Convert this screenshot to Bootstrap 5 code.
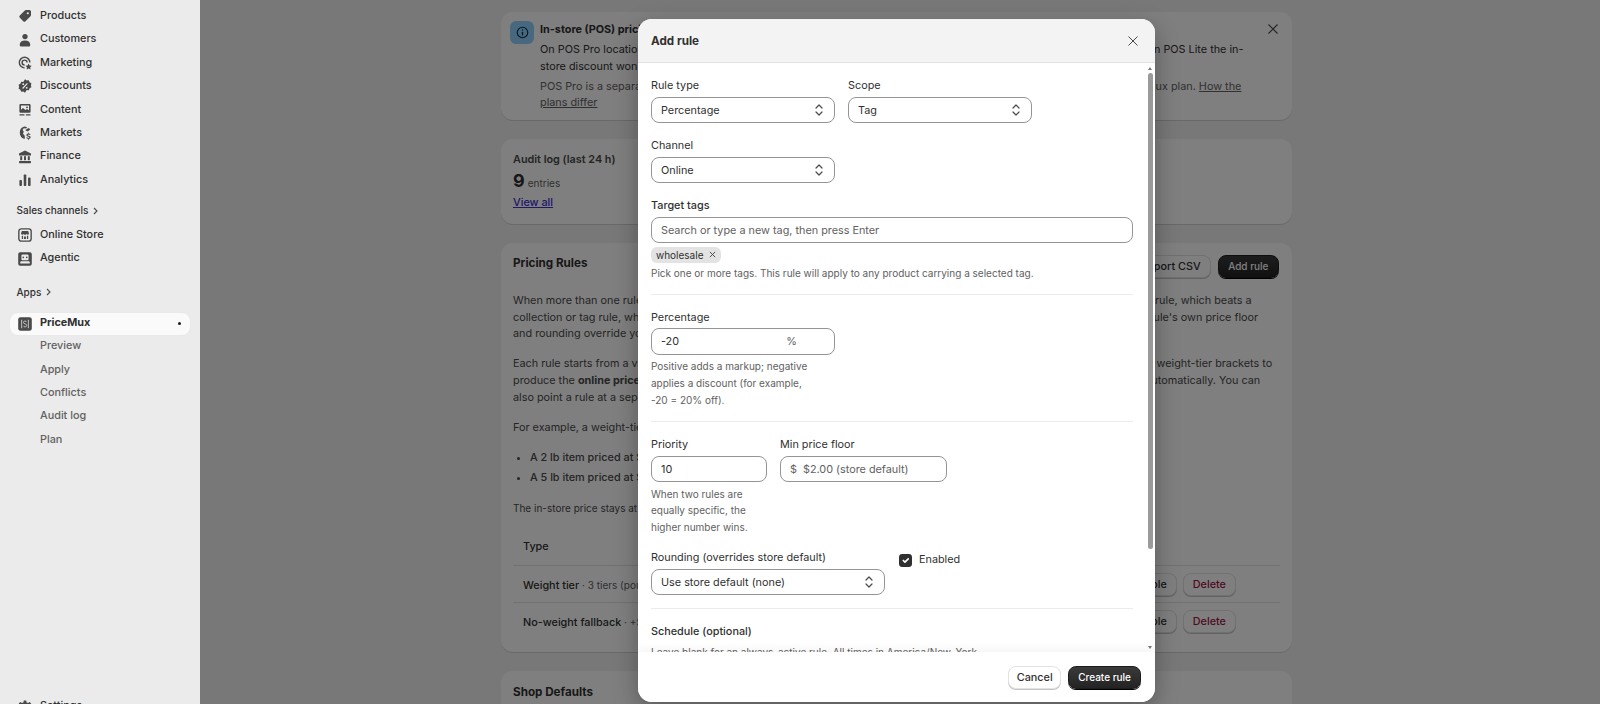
<!DOCTYPE html>
<html lang="en">
<head>
<meta charset="UTF-8">
<title>PriceMux - Pricing Rules</title>
<link href="https://cdn.jsdelivr.net/npm/bootstrap@5.3.0/dist/css/bootstrap.min.css" rel="stylesheet">
<style>
html, body { height: 704px; overflow: hidden; }
body { font-family: Inter, "Liberation Sans", sans-serif; font-size: 10.83px; line-height: 16.67px; color: #303030; background: #f1f1f1; }
.shell { height: 704px; }
a { text-decoration: none; color: inherit; }

/* sidebar */
.side { width: 200px; flex: none; background: #ebebeb; height: 704px; overflow: hidden; padding-top: 4.6px; }
.side > * { flex: none; }
.side-link { height: 23.4px; padding-left: 17px; margin: 0 10px 0 0; font-weight: 550; color: #303030; gap: 7px; }
.side-link svg { width: 16px; height: 16px; flex: none; fill: #4a4a4a; }
.side-head { height: 20px; padding-left: 16.5px; font-size: 10px; font-weight: 550; color: #303030; gap: 4px; }
.side-head svg { width: 7px; height: 8px; }
.side-app { height: 22.4px; margin: 0 10px; padding-left: 7px; padding-right: 9px; border-radius: 8px; background: #fafafa; font-weight: 650; gap: 7px; box-shadow: 0 0 2px rgba(0,0,0,.04); }
.side-app .app-dot { width: 3px; height: 3px; border-radius: 50%; background: #1a1a1a; }
.side-sub { height: 23.4px; padding-left: 40px; font-weight: 500; color: #616161; }
.side-app svg { width: 16px; height: 16px; flex: none; }

/* main */
.main-area { flex: 1; position: relative; height: 704px; overflow: hidden; }
.page-col { width: 791px; margin: 12px auto 0; position: relative; left: -3.5px; }
.panel { border: 0; border-radius: 12px; background: #fff; box-shadow: 0 1px 0 rgba(0,0,0,.12); margin-bottom: 19px; }
.panel-pad { padding: 0 12px; }
.panel-title { font-size: 11.67px; font-weight: 650; line-height: 17px; margin: 0; }
.info-box { width: 24px; height: 23px; border-radius: 6px; background: #91d0ff; flex: none; }
.info-box svg { width: 15px; height: 15px; }
.banner-x { position: absolute; right: 12px; top: 10px; width: 14px; height: 14px; }
.muted-line { color: #616161; }
.stat-num { font-size: 18px; font-weight: 650; line-height: 22px; }
.stat-unit { font-size: 10px; color: #616161; }
.view-link { color: #3f2fd0; font-weight: 500; text-decoration: underline; }
.copy { margin: 0 0 13.3px; white-space: nowrap; color: #4a4a4a; }
.fine { font-size: 10px; white-space: nowrap; color: #4a4a4a; margin: 0; padding-top: 1px; }
.bullets { margin: 0 0 13px; padding-left: 17px; white-space: nowrap; font-weight: 500; color: #4a4a4a; }
.bullets li { margin-bottom: 3.3px; }
.rules-table { margin: 9px 0 0; width: 100%; font-size: 10.83px; }
.rules-table th, .rules-table td { padding: 0 0 0 10px; vertical-align: middle; background: transparent; border-color: #e3e3e3; color: #303030; white-space: nowrap; }
.rules-table th { height: 40px; font-weight: 500; vertical-align: bottom; padding-bottom: 9.5px; }
.rules-table td { height: 37px; font-weight: 500; }
.rules-table td:first-child { padding-top: 2px; }
.rules-table tr:last-child td { border-bottom: 0; }
.rules-table .acts { padding-right: 44px; text-align: right; }
.sub-note { font-size: 10px; color: #616161; font-weight: 400; }
.plain-btn { font-size: 10.83px; font-weight: 500; line-height: 15px; padding: 2.7px 9px; border-radius: 8px; background: #fff; border: 1px solid #e3e3e3; box-shadow: 0 1px 0 #c4c4c4; color: #303030; }
.del-btn { color: #a01545; margin-left: 6px; }
.dark-btn { font-size: 10px; font-weight: 550; line-height: 15px; padding: 3px 9.5px; border-radius: 8px; background: linear-gradient(#3a3a3a, #232323); border: 1px solid #1c1c1c; color: #fff; box-shadow: 0 1px 0 #000; }

/* modal */
.dim { position: absolute; inset: 0; background: rgba(0,0,0,.5); }
.rule-modal { position: absolute; left: 438px; top: 19px; width: 517px; height: 683px; background: #fff; border: 0; border-radius: 14px; overflow: hidden; box-shadow: 0 8px 24px rgba(0,0,0,.3); }
.rule-modal .modal-header { height: 44px; padding: 0 15px 0 13px; background: #f3f3f3; border-bottom: 1px solid #e3e3e3; border-radius: 0; flex: none; }
.rule-title { font-size: 11.67px; font-weight: 650; margin: 0; line-height: 17px; padding-top: 1px; }
.rule-x { width: 14px; height: 14px; }
.rule-body { padding: 14px 22px 0 13px; overflow: hidden; flex: 1; min-height: 0; }
.bar-thumb { position: absolute; left: 510px; top: 54px; width: 5px; height: 476px; border-radius: 3px; background: #9a9a9a; }
.bar-up, .bar-down { position: absolute; left: 510px; width: 0; height: 0; border-left: 2.5px solid transparent; border-right: 2.5px solid transparent; }
.bar-up { top: 48px; border-bottom: 3px solid #777; }
.bar-down { top: 627px; border-top: 3px solid #777; }
.fld-label { display: block; font-size: 10.83px; line-height: 16.67px; font-weight: 420; color: #303030; padding-top: .7px; margin: 0 0 2.3px; }
.fld-strong { font-weight: 520; }
.fld { height: 26.5px; font-size: 10.83px; line-height: 16px; padding: 0 9px; color: #303030; border: 1px solid #949494; border-radius: 8px; box-shadow: none; }
.form-select.fld { padding-top: 2px; padding-right: 24px; background-image: url("data:image/svg+xml,%3csvg xmlns='http://www.w3.org/2000/svg' viewBox='0 0 10 14'%3e%3cpath d='M2 5l3-3 3 3M2 9l3 3 3-3' fill='none' stroke='%234a4a4a' stroke-width='1.2' stroke-linecap='round' stroke-linejoin='round'/%3e%3c/svg%3e"); background-size: 10px 14px; background-position: right 10px center; }
.form-control.fld-val { padding-top: 2px; }
.fld::placeholder { color: #616161; opacity: 1; }
.w-half { width: 184px; }
.w-round { width: 234px; }
.w-prio { width: 116px; }
.w-min { width: 167px; }
.stack { margin-bottom: 14px; }
.row-gap { gap: 13px; }
.tag-chip { font-size: 10px; line-height: 16px; height: 16px; padding: 0 5px 0 5px; border-radius: 6px; background: #e3e3e3; gap: 5px; margin-top: 3.5px; }
.tag-chip svg { width: 7px; height: 7px; }
.hint { font-size: 10px; line-height: 16.67px; color: #616161; margin: 0; }
.hint-top { margin-top: 3.5px; }
.hint-narrow { width: 170px; }
.rule-sep { border: 0; border-top: 1px solid #ebebeb; opacity: 1; margin: 12.5px 0 14px; }
.affix { height: 26.5px; border: 1px solid #949494; border-radius: 8px; padding: 2px 9px 0; gap: 6px; font-size: 10.83px; }
.affix-pct { justify-content: space-between; padding-right: 37px; }
.affix .muted-line { color: #616161; }
.rule-check { width: 13px; height: 13px; margin: 0; border-radius: 3px; flex: none; }
.rule-check:checked { background-color: #303030; border-color: #303030; }
.check-wrap { gap: 7px; padding-top: 3px; margin-left: 14px; align-self: flex-start; }
.rule-foot { height: 50px; padding: 0 14px; flex: none; border: 0; border-radius: 0; background: #fff; box-shadow: 0 -4px 8px rgba(0,0,0,.04); position: relative; gap: 7px; }
.rule-foot > * { margin: 0; }
.rule-foot .plain-btn { height: 23px; padding: 0 7.5px; }
.rule-foot .dark-btn { height: 23px; padding: 0 9px; }
</style>
</head>
<body>
<div class="shell d-flex">
  <nav class="side d-flex flex-column">
    <a class="side-link d-flex align-items-center"><svg viewBox="0 0 20 20"><path fill-rule="evenodd" d="M11.2 2.5h4.3A2 2 0 0 1 17.5 4.5v4.3a2 2 0 0 1-.6 1.4l-6.3 6.3a2 2 0 0 1-2.8 0L3.500 12.200a2 2 0 0 1 0-2.800l6.300-6.300a2 2 0 0 1 1.400-.6zM13.500 5.200a1.300 1.300 0 1 0 0 2.600 1.300 1.300 0 0 0 0-2.600z"/></svg>Products</a>
    <a class="side-link d-flex align-items-center"><svg viewBox="0 0 20 20"><circle cx="10" cy="5.700" r="3.300"/><path d="M3.500 15.500c0-3 2.600-5 6.500-5s6.500 2 6.500 5v1.500a1 1 0 0 1-1 1h-11a1 1 0 0 1-1-1z"/></svg>Customers</a>
    <a class="side-link d-flex align-items-center"><svg viewBox="0 0 20 20"><path d="M9.500 2a7.500 7.500 0 0 1 7.500 7.500h-1.800A5.700 5.700 0 1 0 9.500 15.200V17a7.500 7.500 0 0 1 0-15z"/><path d="M9.500 5.500a4 4 0 0 1 4 4h-1.800a2.200 2.200 0 1 0-2.200 2.200v1.800a4 4 0 0 1 0-8z"/><path d="M14.500 10.500l1.300 2.600 2.700.4-2 1.900.5 2.700-2.500-1.300-2.500 1.300.5-2.700-2-1.900 2.700-.4z"/></svg>Marketing</a>
    <a class="side-link d-flex align-items-center"><svg viewBox="0 0 20 20"><path fill-rule="evenodd" d="M10 1.500l2.200 1.500 2.600-.2.900 2.500 2.300 1.200-.6 2.500.6 2.500-2.300 1.200-.9 2.500-2.600-.2L10 18.500l-2.200-1.500-2.600.2-.9-2.500L2 13.500l.6-2.500L2 8.500l2.300-1.200.9-2.500 2.600.2zM7.800 6.500a1.200 1.200 0 1 0 0 2.400 1.200 1.200 0 0 0 0-2.400zm4.400 4.600a1.200 1.200 0 1 0 0 2.400 1.200 1.200 0 0 0 0-2.400zM12.500 6.300L6.500 12.600l1 1 6-6.300z"/></svg>Discounts</a>
    <a class="side-link d-flex align-items-center"><svg viewBox="0 0 20 20"><path fill-rule="evenodd" d="M4.500 2.500h11A1.500 1.500 0 0 1 17 4v8a1.500 1.500 0 0 1-1.500 1.500h-11A1.500 1.500 0 0 1 3 12V4a1.500 1.500 0 0 1 1.500-1.500zM5 4.500v5.200l2.500-2.200 3 2.600 2-1.500 2.500 1.800V4.500zM12.500 5.500a1.200 1.200 0 1 1 0 2.400 1.200 1.200 0 0 1 0-2.400z"/><rect x="3" y="15.300" width="6.500" height="1.700" rx=".8"/><rect x="11" y="15.300" width="6" height="1.700" rx=".8"/></svg>Content</a>
    <a class="side-link d-flex align-items-center"><svg viewBox="0 0 20 20"><path d="M9 2a8 8 0 0 1 3.800 1L11 4.500 8.500 4 7 6l1.500 2.500L7.500 11l2.200 2.500v3.900A8 8 0 0 1 9 2z"/><path d="M15 3.800l1.500 2L13 8l-2.500-1.500L12 5z"/><path d="M14.800 9.500v1.100c1.200.2 2 .9 2.100 2h-1.400c-.1-.5-.5-.8-1.100-.8-.6 0-1 .3-1 .7 0 .5.400.6 1.300.8 1.400.3 2.400.7 2.400 2 0 1.100-.8 1.800-2.200 2v1.100h-1.100v-1.100c-1.300-.2-2.200-1-2.200-2.100h1.400c.1.500.5.900 1.300.9.700 0 1.100-.3 1.100-.7 0-.5-.4-.6-1.300-.8-1.300-.3-2.300-.7-2.300-2 0-1 .8-1.800 2.100-2V9.500z"/></svg>Markets</a>
    <a class="side-link d-flex align-items-center"><svg viewBox="0 0 20 20"><path d="M10 2l7.500 3.500V8h-15V5.500z"/><rect x="4" y="9" width="2.500" height="5"/><rect x="8.750" y="9" width="2.500" height="5"/><rect x="13.500" y="9" width="2.500" height="5"/><rect x="2.500" y="15" width="15" height="2.800" rx=".8"/></svg>Finance</a>
    <a class="side-link d-flex align-items-center"><svg viewBox="0 0 20 20"><rect x="3" y="10" width="3.200" height="7.500" rx="1"/><rect x="8.400" y="3" width="3.200" height="14.500" rx="1"/><rect x="13.800" y="7" width="3.200" height="10.500" rx="1"/></svg>Analytics</a>

    <div class="side-head d-flex align-items-center" style="margin-top:9px">Sales channels <svg viewBox="0 0 7 8"><path d="M2 1l3 3-3 3" fill="none" stroke="#4a4a4a" stroke-width="1.100"/></svg></div>
    <a class="side-link d-flex align-items-center" style="margin-top:3px"><svg viewBox="0 0 20 20"><rect x="2.300" y="2.300" width="15.400" height="15.400" rx="3" fill="none" stroke="#4a4a4a" stroke-width="1.700"/><path d="M6 5h8l1 3.200c0 .9-.7 1.500-1.500 1.500-.6 0-1.200-.3-1.500-.8-.3.500-.9.8-1.500.8H9.500c-.6 0-1.200-.3-1.500-.8-.3.500-.9.8-1.500.8C5.700 9.700 5 9.100 5 8.200z"/><path d="M6 10.800h1.600V15H6zM12.400 10.800H14V15h-1.600zM8.800 12h2.400v3H8.800z"/></svg>Online Store</a>
    <a class="side-link d-flex align-items-center"><svg viewBox="0 0 20 20"><path fill-rule="evenodd" d="M4 1.500h12A2.500 2.500 0 0 1 18.500 4v12a2.500 2.500 0 0 1-2.500 2.500H4A2.500 2.500 0 0 1 1.500 16V4A2.500 2.500 0 0 1 4 1.500zM7 4.500A1.500 1.500 0 0 0 5.500 6v4A1.500 1.500 0 0 0 7 11.500h6A1.500 1.500 0 0 0 14.500 10V6A1.500 1.500 0 0 0 13 4.500zM7.800 7a1 1 0 1 1 0 2 1 1 0 0 1 0-2zm4.400 0a1 1 0 1 1 0 2 1 1 0 0 1 0-2zM5 12.800c-.6.4-1 1-1 1.700v1h12v-1c0-.7-.4-1.300-1-1.700z"/></svg>Agentic</a>

    <div class="side-head d-flex align-items-center" style="margin-top:11.500px">Apps <svg viewBox="0 0 7 8"><path d="M2 1l3 3-3 3" fill="none" stroke="#4a4a4a" stroke-width="1.100"/></svg></div>
    <a class="side-app d-flex align-items-center" style="margin-top:10.500px"><svg viewBox="0 0 20 20"><rect x="1.500" y="1.500" width="17" height="17" rx="3" fill="#4a4a4a"/><path d="M6.500 5H5.800v10h.7M13.500 5h.7v10h-.7" fill="none" stroke="#ddd" stroke-width="1"/><path d="M12 7.500c-.4-.8-1.100-1.200-2-1.200-1.200 0-2 .7-2 1.700 0 2.400 4.200 1.300 4.200 3.800 0 1-.9 1.800-2.200 1.800-1 0-1.800-.5-2.200-1.300" fill="none" stroke="#ddd" stroke-width="1"/></svg><span class="flex-grow-1">PriceMux</span><span class="app-dot"></span></a>
    <a class="side-sub d-flex align-items-center">Preview</a>
    <a class="side-sub d-flex align-items-center">Apply</a>
    <a class="side-sub d-flex align-items-center">Conflicts</a>
    <a class="side-sub d-flex align-items-center">Audit log</a>
    <a class="side-sub d-flex align-items-center">Plan</a>
    <a class="side-link d-flex align-items-center" style="margin-top:243px"><svg viewBox="0 0 20 20"><path fill-rule="evenodd" d="M8.500 2h3l.5 2.300 1.800.8 2-1.200 2 2-1.200 2 .8 1.800 2.300.5v3l-2.300.5-.8 1.800 1.200 2-2 2-2-1.200-1.800.8-.5 2.300h-3L8 18.900l-1.800-.8-2 1.200-2-2 1.200-2-.8-1.800L.3 13V10l2.300-.5.8-1.800-1.200-2 2-2 2 1.200L8 4.300z"/></svg>Settings</a>
  </nav>

  <main class="main-area">
    <div class="page-col">
      <div class="card panel" style="height:108px">
        <div class="d-flex" style="padding:9px 40px 0 9px;gap:6px">
          <div class="info-box d-flex align-items-center justify-content-center"><svg viewBox="0 0 20 20"><circle cx="10" cy="10" r="7" fill="none" stroke="#00324a" stroke-width="1.500"/><rect x="9.200" y="9" width="1.600" height="5" rx=".7" fill="#00324a"/><circle cx="10" cy="6.800" r="1" fill="#00324a"/></svg></div>
          <div class="text-nowrap" style="padding-top:1px">
            <div style="font-weight:650;margin-bottom:3.500px">In-store (POS) pricing</div>
            <div>On POS Pro locations, PriceMux automatically applies your own shop's in-store pricing rules to each sale at checkout. On POS Lite the in-<br>store discount won't apply automatically.</div>
            <div class="muted-line" style="margin-top:3px">POS Pro is a separate paid Shopify subscription per branch billed by Shopify directly and isn't included with your PriceMux plan. <u>How the</u><br><u>plans differ</u></div>
          </div>
        </div>
        <svg class="banner-x" viewBox="0 0 14 14"><path d="M2.500 2.500l9 9M11.500 2.500l-9 9" stroke="#4a4a4a" stroke-width="1.100" fill="none"/></svg>
      </div>

      <div class="card panel panel-pad" style="height:85px;padding-top:13px">
        <div style="font-weight:600;color:#4a4a4a">Audit log (last 24 h)</div>
        <div style="margin-top:1px"><span class="stat-num">9</span> <span class="stat-unit">entries</span></div>
        <div style="margin-top:3px"><a href="#" class="view-link">View all</a></div>
      </div>

      <div class="card panel panel-pad" style="height:409px">
        <div class="d-flex align-items-center justify-content-between" style="height:39px;padding-right:1px">
          <h2 class="panel-title" style="padding-top:2px">Pricing Rules</h2>
          <div class="d-flex" style="gap:7px;margin-top:7px;">
            <button class="plain-btn">Export CSV</button>
            <button class="dark-btn">Add rule</button>
          </div>
        </div>
        <div style="padding-top:11px">
          <p class="copy">When more than one rule matches a product, the most specific rule will take effect first: a variant-level rule beats the product rule, which beats a<br>collection or tag rule, which in turn beats a store-wide rule. Any ties are settled by priority, and every matching rule uses the rule's own price floor<br>and rounding override your store defaults.</p>
          <p class="copy">Each rule starts from a variant's current compare-at/base price, then applies its configured percentage, fixed cash amount or weight-tier brackets to<br>produce the <b>online price</b>. PriceMux then writes the new derived prices to your online sales channel on every single change automatically. You can<br>also point a rule at a separate channel.</p>
          <p class="copy">For example, a weight-tier rule adds a surcharge by item weight:</p>
          <ul class="bullets">
            <li>A 2 lb item priced at $20.00 sells online for $23.00.</li>
            <li>A 5 lb item priced at $20.00 sells online for $26.00.</li>
          </ul>
          <p class="fine">The in-store price stays at $20.00 for both.</p>
        </div>
        <table class="table rules-table">
          <thead><tr><th>Type</th><th></th><th></th></tr></thead>
          <tbody>
            <tr><td>Weight tier <span class="sub-note">· 3 tiers (pounds)</span></td><td></td><td class="acts"><button class="plain-btn">Disable</button><button class="plain-btn del-btn">Delete</button></td></tr>
            <tr><td>No-weight fallback <span class="sub-note">· +$1.00</span></td><td></td><td class="acts"><button class="plain-btn">Disable</button><button class="plain-btn del-btn">Delete</button></td></tr>
          </tbody>
        </table>
      </div>

      <div class="card panel panel-pad" style="height:200px;padding-top:13px">
        <h2 class="panel-title">Shop Defaults</h2>
      </div>
    </div>

    <div class="dim"></div>

    <div class="modal-content rule-modal">
      <div class="modal-header d-flex justify-content-between align-items-center">
        <h5 class="rule-title">Add rule</h5>
        <svg class="rule-x" viewBox="0 0 14 14"><path d="M2.500 2.500l9 9M11.500 2.500l-9 9" stroke="#4a4a4a" stroke-width="1" fill="none"/></svg>
      </div>
      <div class="rule-body">
        <div class="d-flex row-gap stack">
          <div class="w-half"><label class="fld-label">Rule type</label><select class="form-select fld"><option>Percentage</option></select></div>
          <div class="w-half"><label class="fld-label">Scope</label><select class="form-select fld"><option>Tag</option></select></div>
        </div>
        <div class="w-half stack"><label class="fld-label">Channel</label><select class="form-select fld"><option>Online</option></select></div>
        <label class="fld-label fld-strong">Target tags</label>
        <input class="form-control fld" placeholder="Search or type a new tag, then press Enter">
        <span class="tag-chip d-inline-flex align-items-center">wholesale <svg viewBox="0 0 8 8"><path d="M1 1l6 6M7 1L1 7" stroke="#4a4a4a" stroke-width="1.100" fill="none"/></svg></span>
        <p class="hint">Pick one or more tags. This rule will apply to any product carrying a selected tag.</p>
        <hr class="rule-sep">

        <div class="w-half">
          <label class="fld-label">Percentage</label>
          <div class="affix affix-pct d-flex align-items-center"><span>-20</span><span class="muted-line">%</span></div>
          <p class="hint hint-top hint-narrow">Positive adds a markup; negative applies a discount (for example, -20 = 20% off).</p>
        </div>
        <hr class="rule-sep">

        <div class="d-flex row-gap">
          <div class="w-prio">
            <label class="fld-label">Priority</label>
            <input class="form-control fld fld-val" value="10">
            <p class="hint hint-top">When two rules are equally specific, the higher number wins.</p>
          </div>
          <div class="w-min">
            <label class="fld-label">Min price floor</label>
            <div class="affix d-flex align-items-center"><span class="muted-line">$</span><span class="muted-line">$2.00 (store default)</span></div>
          </div>
        </div>
        <div class="d-flex align-items-end" style="margin-top:13.500px">
          <div class="w-round"><label class="fld-label">Rounding (overrides store default)</label><select class="form-select fld"><option>Use store default (none)</option></select></div>
          <div class="check-wrap d-flex align-items-center"><input class="form-check-input rule-check" type="checkbox" checked><span>Enabled</span></div>
        </div>
        <hr class="rule-sep">

        <div class="fld-label fld-strong">Schedule (optional)</div>
        <p class="hint" style="margin-top:3.500px">Leave blank for an always-active rule. All times in America/New_York.</p>
      </div>
      <div class="modal-footer rule-foot d-flex justify-content-end align-items-center">
        <button class="plain-btn">Cancel</button>
        <button class="dark-btn">Create rule</button>
      </div>
      <span class="bar-up"></span><span class="bar-thumb"></span><span class="bar-down"></span>
    </div>
  </main>
</div>
<script src="https://cdn.jsdelivr.net/npm/bootstrap@5.3.0/dist/js/bootstrap.bundle.min.js"></script>
</body>
</html>
